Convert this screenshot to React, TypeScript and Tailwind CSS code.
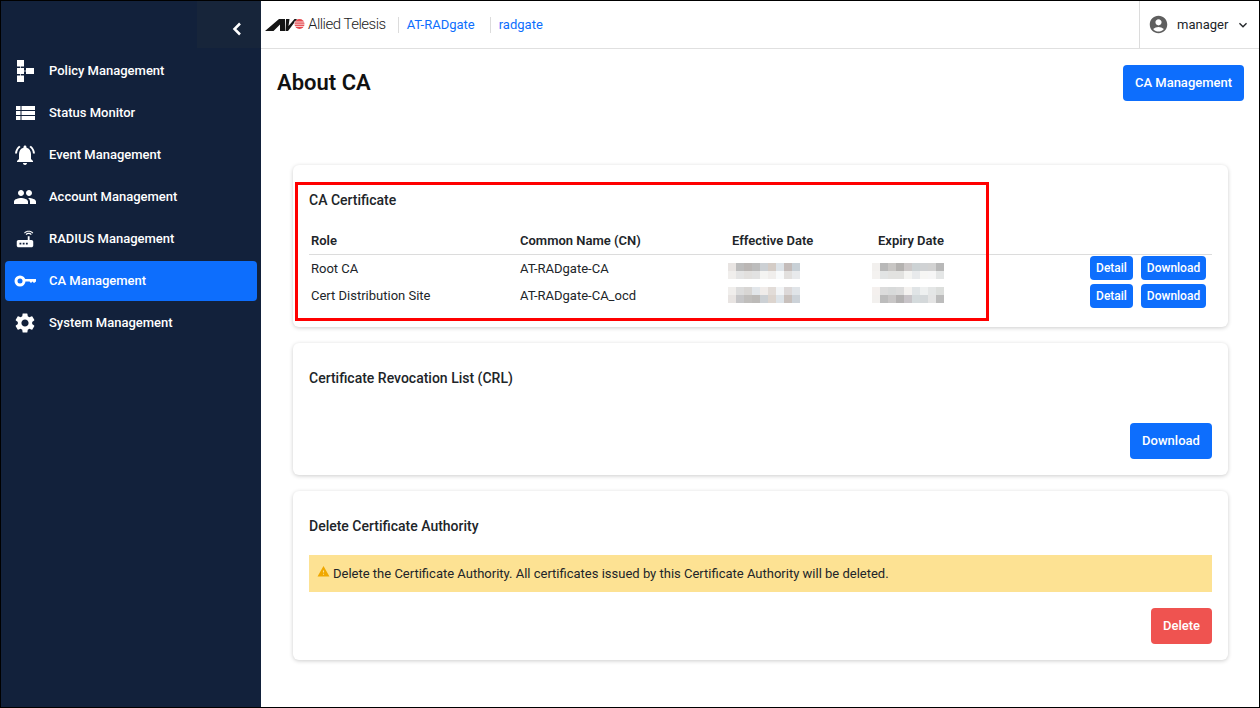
import { MdNotificationsActive, MdPeople, MdRouter, MdSettings, MdAccountCircle, MdExpandMore, MdWarning } from "react-icons/md";
import type { ReactNode } from "react";

const font = "font-['Roboto','Liberation_Sans',sans-serif]";

function PolicyIcon() {
  return (
    <svg width="17" height="22" viewBox="0 0 17 22" fill="#fff">
      <rect x="0" y="0" width="7" height="6.5" />
      <rect x="0" y="8" width="7" height="6" />
      <rect x="0" y="15.5" width="7" height="6.5" />
      <rect x="9" y="8" width="8" height="6" />
      <rect x="3" y="6" width="1" height="10" opacity="0.7" />
      <rect x="7" y="10.5" width="2" height="1" opacity="0.7" />
    </svg>
  );
}

function TableIcon() {
  return (
    <svg width="19" height="14" viewBox="0 0 19 14" fill="#fff">
      {[0, 5, 10].map((y) => (
        <g key={y}>
          <rect x="0" y={y} width="4.5" height="4" />
          <rect x="5.5" y={y} width="13.5" height="4" />
        </g>
      ))}
    </svg>
  );
}

function KeyIcon() {
  return (
    <svg width="22" height="12" viewBox="0 0 22 12" fill="none">
      <circle cx="6" cy="6" r="4" stroke="#fff" strokeWidth="3" />
      <path d="M10 4h12v2.5l-2 1.5-1.5-1.5-1.5 1.5-1.5-1.5h-5.500z" fill="#fff" />
    </svg>
  );
}

const menu: { label: string; icon: ReactNode; active?: boolean }[] = [
  { label: "Policy Management", icon: <PolicyIcon /> },
  { label: "Status Monitor", icon: <TableIcon /> },
  { label: "Event Management", icon: <MdNotificationsActive size={24} color="#fff" /> },
  { label: "Account Management", icon: <MdPeople size={24} color="#fff" /> },
  { label: "RADIUS Management", icon: <MdRouter size={22} color="#fff" /> },
  { label: "CA Management", icon: <KeyIcon />, active: true },
  { label: "System Management", icon: <MdSettings size={24} color="#fff" /> },
];

const certs = [
  {
    role: "Root CA",
    cn: "AT-RADgate-CA",
    dateClass: "mt-[6px]",
    effective: [
      ["#e8e4e2", "#bcbcbc", "#bab6b4", "#bcbcbc", "#ccd0d4", "#d4ccc6", "#dde3e8", "#c4bcba", "#c8d0d6"],
      ["#f0eeec", "#e4e4e4", "#e2e0de", "#e2e2e2", "#f4f4f2", "#f0eeec", "#f8fafb", "#e2e0de", "#e8eaec"],
    ],
    expiry: [
      ["#f2f0ee", "#b8b8b8", "#c8c6c4", "#b4b2b0", "#ccc8c8", "#ccd2d4", "#d0d2d4", "#d2d2d2", "#b8b8b8"],
      ["#f4f2f0", "#e2e4e4", "#e2e2e0", "#e2e2e0", "#f4f4f2", "#e8eaec", "#f6f6f4", "#f6f6f6", "#e4e6e6"],
    ],
  },
  {
    role: "Cert Distribution Site",
    cn: "AT-RADgate-CA_ocd",
    dateClass: "mb-[2px]",
    effective: [
      ["#f0eeec", "#dcdcdc", "#d8d6d4", "#e2e6ea", "#f0ecea", "#e2dcd8", "#f2f4f6", "#dcd8d8", "#e0e4e8"],
      ["#e8e4e2", "#c6c6c8", "#c0bebc", "#bcbab8", "#ccd0d4", "#dcd4ce", "#dde3e8", "#c8c0bc", "#ccd2d8"],
    ],
    expiry: [
      ["#f4f0ee", "#dcdcdc", "#d8dada", "#dcdcdc", "#f4f2f0", "#e0e4e6", "#eef0f0", "#e4e6e6", "#dcdedc"],
      ["#f2f0ee", "#bcbcbc", "#c8c6c6", "#b4b2b2", "#c8c4c8", "#d4dadc", "#d4d8da", "#e4e4e4", "#bcbcbc"],
    ],
  },
];

function Pixelated({ rows, className }: { rows: string[][]; className: string }) {
  return (
    <div className={`flex flex-col ${className}`}>
      {rows.map((row, i) => (
        <div key={i} className="flex">
          {row.map((c, j) => (
            <div key={j} className="w-2 h-2" style={{ background: c }} />
          ))}
        </div>
      ))}
    </div>
  );
}

function SmallButton({ children, className }: { children: ReactNode; className: string }) {
  return (
    <button className={`h-6 rounded bg-[#0d6efd] text-white text-xs font-medium ${className}`}>{children}</button>
  );
}

function Card({ className, children }: { className: string; children: ReactNode }) {
  return (
    <section className={`bg-white rounded-md shadow-[0_1px_4px_rgba(0,0,0,0.2)] px-4 ${className}`}>{children}</section>
  );
}

function Logo() {
  return (
    <div className="flex items-center">
      <svg width="41" height="14" viewBox="0 0 41 14">
        <path d="M0 13 L14 1 H20 V13 H15 V6.500 L8.500 13 Z" fill="#151515" />
        <path d="M21 1 H24.500 L23.500 8 L29.500 1 H32 L23 13 H20.500 Z" fill="#151515" />
        <circle cx="34.500" cy="6" r="5" fill="#e5484d" />
        <path d="M29 4h11M29 6.200h11M29 8.400h11" stroke="#fff" strokeWidth="0.8" />
      </svg>
      <span className="ml-[2px] text-[15px] font-light text-[#222] tracking-[-0.5px] leading-none">Allied Telesis</span>
    </div>
  );
}

export default function App() {
  return (
    <div className={`w-[1260px] h-[708px] flex border border-black overflow-hidden bg-white text-[#212529] ${font}`}>
      {/* Sidebar */}
      <aside className="w-[260px] shrink-0 bg-[#12213b] flex flex-col">
        <div className="h-[47px] flex justify-end">
          <div className="w-[64px] bg-[#17253a] flex items-center pl-[35px] pt-2">
            <svg width="10" height="14" viewBox="0 0 10 14" fill="none">
              <path d="M8 1.500 L2.500 7 L8 12.500" stroke="#fff" strokeWidth="2.500" />
            </svg>
          </div>
        </div>
        <nav className="pt-[3px] px-1 flex flex-col gap-[2px]">
          {menu.map((m) => (
            <div
              key={m.label}
              className={`w-[252px] h-10 rounded flex items-center text-[13px] font-medium text-white ${m.active ? "bg-[#0d6efd]" : ""}`}
            >
              <div className="w-10 flex items-center justify-center">{m.icon}</div>
              <span className="ml-1">{m.label}</span>
            </div>
          ))}
        </nav>
      </aside>

      <div className="flex-1 flex flex-col min-w-0">
        {/* Top bar */}
        <header className="h-[48px] shrink-0 flex items-center border-b border-[#e0e0e0] pl-1">
          <Logo />
          <div className="ml-3 pl-2 h-4 border-l border-[#dcdcdc] flex items-center text-[13px] text-[#0d6efd]">AT-RADgate</div>
          <div className="ml-[15px] pl-2 h-4 border-l border-[#dcdcdc] flex items-center text-[13px] text-[#0d6efd]">radgate</div>
          <div className="ml-auto h-full w-[120px] border-l border-[#dcdcdc] flex items-center pl-2 text-[13px]">
            <MdAccountCircle size={21} color="#5f5f5f" />
            <span className="ml-2">manager</span>
            <MdExpandMore size={16} className="ml-[7px]" />
          </div>
        </header>

        {/* Content */}
        <main className="flex-1 relative pl-4 pr-[15px] min-h-0">
          <div className="flex justify-between items-start pt-4">
            <h1 className="text-[22px] font-semibold leading-[36px] text-[#111]">About CA</h1>
            <button className="w-[121px] h-9 rounded bg-[#0d6efd] text-white text-[13px] font-medium">CA Management</button>
          </div>

          <div className="pt-16 pl-4 w-[951px] flex flex-col gap-4">
            <Card className="h-[162px] pt-[25px]">
              <h2 className="text-sm font-medium leading-5">CA Certificate</h2>
              <table className="w-full mt-[18px] text-[13px] border-collapse">
                <thead>
                  <tr className="h-[26px] border-b border-[#dcdcdc] text-left">
                    <th className="w-[209px] pl-[2px] font-semibold">Role</th>
                    <th className="w-[212px] font-semibold pl-[2px]">Common Name (CN)</th>
                    <th className="w-[146px] font-semibold pl-[2px]">Effective Date</th>
                    <th className="font-semibold pl-[2px]">Expiry Date</th>
                    <th />
                  </tr>
                </thead>
                <tbody>
                  {certs.map((c) => (
                    <tr key={c.role} className="h-[28px]">
                      <td className="pl-[2px]">{c.role}</td>
                      <td className="pl-[2px]">{c.cn}</td>
                      <td><Pixelated rows={c.effective} className={`-ml-[2px] ${c.dateClass}`} /></td>
                      <td><Pixelated rows={c.expiry} className={`-ml-1 ${c.dateClass}`} /></td>
                      <td>
                        <div className="flex justify-end gap-2 pr-[6px]">
                          <SmallButton className="w-[43px]">Detail</SmallButton>
                          <SmallButton className="w-[65px]">Download</SmallButton>
                        </div>
                      </td>
                    </tr>
                  ))}
                </tbody>
              </table>
            </Card>

            <Card className="h-[132px] pt-[25px]">
              <h2 className="text-sm font-medium leading-5">Certificate Revocation List (CRL)</h2>
              <div className="flex justify-end mt-[35px]">
                <button className="w-[82px] h-9 rounded bg-[#0d6efd] text-white text-[13px] font-medium">Download</button>
              </div>
            </Card>

            <Card className="h-[169px] pt-[25px]">
              <h2 className="text-sm font-medium leading-5">Delete Certificate Authority</h2>
              <div className="mt-[19px] h-[37px] bg-[#fde293] flex items-center pl-2 text-[13px]">
                <MdWarning size={13} color="#f0a800" className="-mt-1" />
                <span className="ml-[3px]">Delete the Certificate Authority. All certificates issued by this Certificate Authority will be deleted.</span>
              </div>
              <div className="flex justify-end mt-4">
                <button className="w-[61px] h-9 rounded bg-[#ef5350] text-white text-[13px] font-medium">Delete</button>
              </div>
            </Card>
          </div>

          {/* Red annotation box */}
          <div className="absolute left-[34px] top-[133px] w-[694px] h-[139px] border-[3px] border-[#ff0000] pointer-events-none" />
        </main>
      </div>
    </div>
  );
}
